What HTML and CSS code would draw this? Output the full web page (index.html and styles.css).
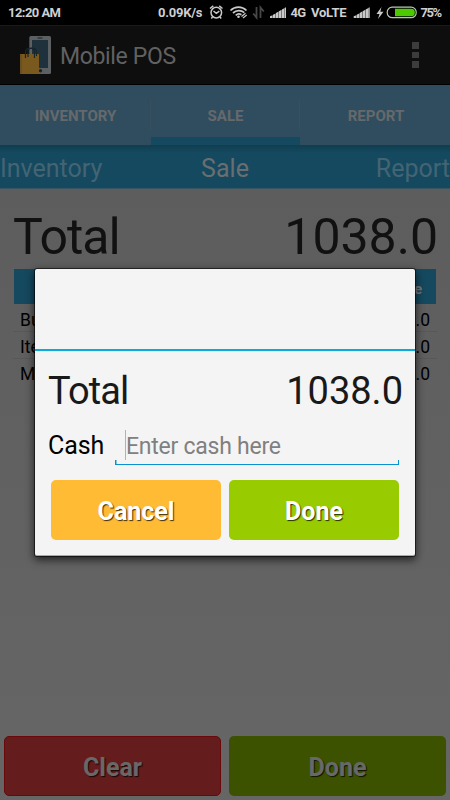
FILE: index.html
```html
<!DOCTYPE html>
<html lang="en">
<head>
<meta charset="utf-8">
<title>Mobile POS</title>
<link rel="stylesheet" href="styles.css">
</head>
<body>
<div class="screen">
  <header class="status">
    <svg width="56" height="25"><text x="0" y="17.300" textLength="53">12:20 AM</text></svg>
    <svg class="status-icons" width="292" height="25" viewBox="158 0 292 25">
      <text x="158" y="17.3" textLength="44.500">0.09K/s</text>
      <g fill="none" stroke="#c9c9c9" stroke-width="1.5">
        <circle cx="216.300" cy="12.600" r="5.300"/>
        <path d="M213.500 11l2.800 2.300 3-2.200M210 8.500l3.300-2.700M222.500 8.500l-3.300-2.700M212.500 17l-1.200 1.500M220 17l1.200 1.500"/>
        <path d="M230.500 10.500c4.500-4.500 11.500-4.500 16 0M233 13c3.300-3 8-3 11.300-.3M235.700 15.300c2-1.700 4-1.700 5.700-.5" stroke-width="1.700"/>
        <path d="M241.500 16.500l4-3.300M243 18l3.700-3" stroke-width="1.200"/>
      </g>
      <circle cx="238.500" cy="16.800" r="1.300" fill="#c9c9c9"/>
      <path d="M256.500 7v10.500l-3.300-4M260.500 18V7.500l3.300 4" fill="none" stroke="#484848" stroke-width="1.800"/>
      <g id="signal" fill="#c9c9c9">
        <path d="M270 18v-1.800l2.600-1V18zM273 18v-3.200l2.600-1.200V18zM276 18v-5l2.600-1.400V18zM279 18v-6.800l2.600-1.500V18zM282 18V9.500l2.300-1.200V18z"/>
        <path d="M284.500 18V8l1.500-.8V18z"/>
      </g>
      <text x="290.500" y="17.300" textLength="15.500">4G</text>
      <text x="311" y="17.300" textLength="35.500">VoLTE</text>
      <use href="#signal" x="83.700"/>
      <path d="M381.500 7l-5 7h3l-1.500 5 5.500-7.200h-3.200z" fill="#c9c9c9"/>
      <rect x="387.200" y="7.200" width="29" height="10.500" rx="5" fill="#000" stroke="#b9c7b3" stroke-width="1.200"/>
      <path d="M395 8.700h16.500q3.300 0 3.300 3.750t-3.300 3.750H395z" fill="#4cc900"/>
      <text x="420.500" y="17.300" textLength="21.500">75%</text>
    </svg>
  </header>

  <div class="actionbar">
    <svg class="logo" width="32" height="40" viewBox="0 0 32 40">
      <rect x="9.300" y="1" width="21.700" height="38" rx="1.500" fill="#5c6062"/>
      <rect x="12" y="5" width="16" height="28" fill="#20313e"/>
      <path d="M17.500 3h5" stroke="#222b31" stroke-width="1.200"/>
      <circle cx="20.500" cy="35.800" r="1.700" fill="#18252d"/>
      <path d="M0 19h19v20H0z" fill="#79591e"/>
      <path d="M0 19h2v20H0z" fill="#685024"/>
      <path d="M5.500 23v-6c0-5 9-5 9 0v6M8 22v-6c0-4 8.500-4 8.500 1v4" fill="none" stroke="#17252d" stroke-width="1.200"/>
    </svg>
    <span class="app-title">Mobile POS</span>
    <span class="overflow"><i></i><i></i><i></i></span>
  </div>

  <nav class="tabs">
    <span class="tab">INVENTORY</span>
    <span class="tab active">SALE</span>
    <span class="tab">REPORT</span>
  </nav>
  <div class="pager"><span>Inventory</span><span class="current">Sale</span><span>Report</span></div>

  <main class="content">
    <div class="total"><span class="label">Total</span><span class="amount">1038.0</span></div>
    <div class="thead"><span>Price</span></div>
    <div class="row"><span>Bu</span><span>.0</span></div>
    <div class="row"><span>Ite</span><span>.0</span></div>
    <div class="row"><span>M</span><span>.0</span></div>
  </main>
  <footer class="actions">
    <button class="btn clear">Clear</button>
    <button class="btn confirm">Done</button>
  </footer>

  <section class="dialog">
    <div class="dialog-head"></div>
    <div class="dialog-total"><span class="label">Total</span><span class="amount">1038.0</span></div>
    <div class="cash">
      <label>Cash</label>
      <div class="field"><span class="hint">Enter cash here</span></div>
    </div>
    <div class="dialog-actions">
      <button class="btn cancel">Cancel</button>
      <button class="btn done">Done</button>
    </div>
  </section>
</div>
</body>
</html>
```
FILE: styles.css
```css
* { box-sizing: border-box; }
body { margin: 0; font-family: Roboto, sans-serif; }
.screen {
  position: relative;
  width: 450px;
  height: 800px;
  overflow: hidden;
  display: flex;
  flex-direction: column;
  background: linear-gradient(#5d5d5d 188px, #666 800px);
}
.status {
  height: 25px;
  flex: none;
  display: flex;
  align-items: center;
  justify-content: space-between;
  padding-left: 8px;
  background: #000;
}
.status svg { display: block; }
.status text { font: 700 13px Roboto, sans-serif; fill: #cfcfcf; }
.actionbar {
  height: 60px;
  flex: none;
  display: flex;
  align-items: center;
  padding: 0 31px 0 20px;
  background: #0e0e0e;
  border-top: 1px solid #191919;
  border-bottom: 1px solid #000;
}
.app-title { margin-left: 8px; font-size: 23px; letter-spacing: -.35px; color: #616161; padding-top: 2px; }
.overflow { margin-left: auto; display: grid; gap: 3px; }
.overflow i { width: 7px; height: 6.500px; background: #3c3c3c; }
.tabs {
  height: 60px;
  flex: none;
  display: grid;
  grid-template-columns: 151px 149px 150px;
  background: #304d5f;
}
.tab {
  position: relative;
  display: flex;
  align-items: center;
  justify-content: center;
  padding-top: 2px;
  font-size: 15px;
  font-weight: 700;
  color: #65696b;
}
.tab:last-child { padding-left: 2px; }
.tab.active { border-bottom: 8px solid #15495f; padding-top: 10px; }
.tab + .tab::before {
  content: "";
  position: absolute;
  left: -1px;
  top: 15px;
  width: 1px;
  height: 30px;
  background: #38505b;
}
.pager {
  height: 44px;
  flex: none;
  display: grid;
  grid-template-columns: 1fr 1fr 1fr;
  align-items: center;
  padding-top: 4px;
  font-size: 25px;
  color: #446474;
  background: linear-gradient(#113d50, #15495f 8px);
  border-bottom: 1px solid #365461;
}
.pager .current { text-align: center; color: #6a6e70; }
.pager span:last-child { text-align: right; }
.content { padding: 15px 14px 0; flex: 1; }
.total {
  height: 65px;
  display: flex;
  justify-content: space-between;
  align-items: center;
  font-size: 50px;
  color: #111;
}
.total .label { margin-left: -1px; letter-spacing: -1px; }
.total .amount { margin-right: -2px; }
.thead {
  height: 35px;
  display: flex;
  align-items: center;
  justify-content: flex-end;
  padding: 4px 14px 0 18px;
  font-size: 15px;
  font-weight: 700;
  color: #777;
  background: #15495f;
}
.row {
  height: 27px;
  margin: 0 -1px;
  padding: 4px 7px 0;
  display: flex;
  align-items: center;
  justify-content: space-between;
  font-size: 17.500px;
  color: #000;
  border-bottom: 1px solid #585858;
}
.row:nth-child(3) { height: 28px; }
.row:last-child { border-bottom: 0; padding-top: 2px; }
.actions { display: grid; grid-template-columns: 1fr 1fr; gap: 8px; padding: 0 4px 4px; }
.btn {
  height: 60px;
  padding: 3px 0 0;
  border: 0;
  border-radius: 5px;
  font: 700 25px Roboto, sans-serif;
  color: #fff;
  text-shadow: 1px 1px 1px rgba(0, 0, 0, .75);
}
.clear { background: #651c1c; border: 1px solid #690909; color: #686868; }
.confirm { background: #3d5200; color: #686868; }
.dialog {
  position: absolute;
  left: 35px;
  top: 269px;
  width: 380px;
  height: 287px;
  background: #f4f4f4;
  border-radius: 2px;
  border-bottom: 1px solid #aaa;
  box-shadow: 0 0 0 1px rgba(0, 0, 0, .55), 0 3px 9px 1px rgba(0, 0, 0, .65);
}
.dialog-head { height: 82px; border-bottom: 2px solid #0aabdc; }
.dialog-total {
  height: 79px;
  padding: 0 13px;
  display: flex;
  justify-content: space-between;
  align-items: center;
  font-size: 38px;
  color: #191919;
}
.dialog-total .label { letter-spacing: -.9px; }
.dialog-total .amount { margin-right: -1px; }
.cash { height: 35px; display: flex; padding: 0 16px 0 13px; font-size: 25px; color: #000; }
.cash label { width: 67px; line-height: 31px; letter-spacing: -.1px; }
.field {
  flex: 1;
  height: 35px;
  padding-left: 10px;
  background:
    linear-gradient(#0a91cf, #0a91cf) left bottom / 1.500px 5px no-repeat,
    linear-gradient(#0a91cf, #0a91cf) right bottom / 1.500px 5px no-repeat,
    linear-gradient(#0a91cf, #0a91cf) left bottom / 100% 1.500px no-repeat;
}
.hint { display: block; height: 30px; line-height: 33px; border-left: 1px solid #b2b2b2; font-size: 23px; letter-spacing: -.25px; color: #808080; }
.dialog-actions { display: grid; grid-template-columns: 1fr 1fr; gap: 8px; padding: 15px 16px; }
.cancel { background: #ffbb33; }
.done { background: #99cc00; }
```
